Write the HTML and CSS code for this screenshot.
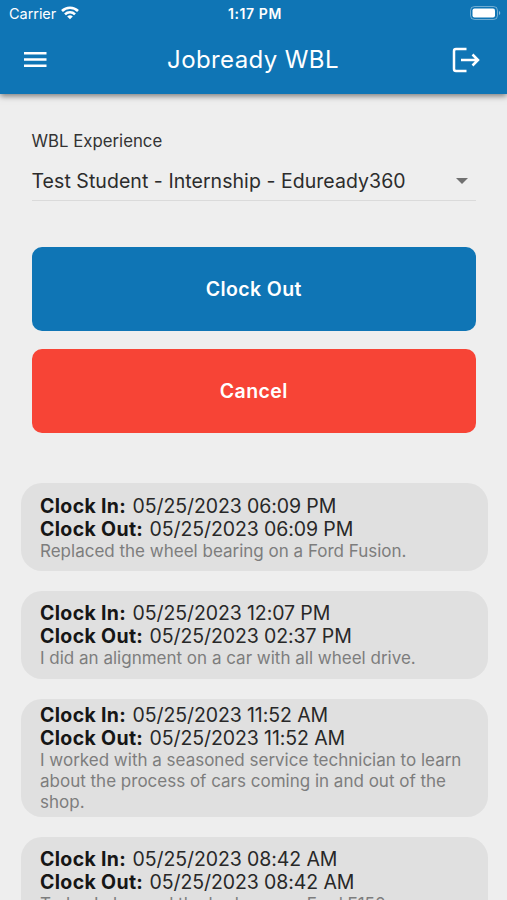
FILE: index.html
```html
<!DOCTYPE html>
<html lang="en">
<head>
<meta charset="utf-8">
<title>Jobready WBL</title>
<link rel="stylesheet" href="styles.css">
</head>
<body>
<header class="top">
  <div class="status">
    <div class="carrier"><span>Carrier</span>
      <svg width="18" height="14" viewBox="0 0 18 14" fill="none" stroke="#fff" stroke-width="2.6"><path d="M1 5a11.3 11.3 0 0 1 16 0M4 8.300a7.100 7.100 0 0 1 10 0"/><path d="M9 13.300 6.200 10.500a4 4 0 0 1 5.600 0z" fill="#fff" stroke="none"/></svg>
    </div>
    <div class="time">1:17 PM</div>
    <svg class="battery" width="31" height="14" viewBox="0 0 31 14"><rect x=".5" y=".5" width="27" height="13" rx="4" fill="none" stroke="#fff" stroke-opacity=".4"/><rect x="2.500" y="2.500" width="22.500" height="9" rx="2" fill="#fff"/><path d="M29 5a2.200 2.200 0 0 1 0 4z" fill="#fff" fill-opacity=".5"/></svg>
  </div>
  <div class="bar">
    <svg class="menu" width="24" height="16" viewBox="0 0 24 16" fill="#fff"><path d="M0 0h22.500v2.500H0zM0 6.300h22.500v2.500H0zM0 12.600h22.500v2.500H0z"/></svg>
    <h1>Jobready WBL</h1>
    <svg class="exit" width="28" height="26" viewBox="0 0 28 26" fill="none" stroke="#fff" stroke-width="2.500"><path d="M14.500 2H4Q2 2 2 4v18q0 2 2 2h10.500M9 13h17M20.500 7.500 26 13l-5.500 5.500"/></svg>
  </div>
</header>
<main>
  <section class="form">
    <div class="label">WBL Experience</div>
    <div class="select"><span>Test Student - Internship - Eduready360</span><i class="caret"></i></div>
    <button class="btn out">Clock Out</button>
    <button class="btn cancel">Cancel</button>
  </section>
  <section class="list">
    <article class="card first"><div class="row"><b>Clock In:</b> 05/25/2023 06:09 PM</div><div class="row"><b>Clock Out:</b> 05/25/2023 06:09 PM</div><p>Replaced the wheel bearing on a Ford Fusion.</p></article>
    <article class="card"><div class="row"><b>Clock In:</b> 05/25/2023 12:07 PM</div><div class="row"><b>Clock Out:</b> 05/25/2023 02:37 PM</div><p>I did an alignment on a car with all wheel drive.</p></article>
    <article class="card long"><div class="row"><b>Clock In:</b> 05/25/2023 11:52 AM</div><div class="row"><b>Clock Out:</b> 05/25/2023 11:52 AM</div><p>I worked with a seasoned service technician to learn<br>about the process of cars coming in and out of the<br>shop.</p></article>
    <article class="card"><div class="row"><b>Clock In:</b> 05/25/2023 08:42 AM</div><div class="row"><b>Clock Out:</b> 05/25/2023 08:42 AM</div><p>Today I changed the brakes on a Ford F150.</p></article>
  </section>
</main>
</body>
</html>
```
FILE: styles.css
```css
* { box-sizing: border-box; }
body { margin: 0; height: 900px; overflow: hidden; background: #eee; color: #282828; font-family: Inter, "Liberation Sans", sans-serif; }
.top { height: 94px; background: #0f75b5; color: #fff; box-shadow: 0 2px 6px rgba(0,0,0,.5); }
.status { height: 27px; display: grid; grid-template-columns: 1fr auto 1fr; align-items: center; padding: 0 6px 0 9px; font-size: 14.5px; }
.carrier { display: flex; align-items: center; gap: 6px; }
.carrier span { letter-spacing: -.05px; }
.carrier svg { margin-left: -1px; position: relative; top: -1px; }
.time { font-weight: 600; font-size: 14px; letter-spacing: .6px; }
.battery { justify-self: end; position: relative; top: -1px; }
.bar { height: 66px; display: grid; grid-template-columns: 1fr auto 1fr; align-items: center; padding: 0 27px 0 24px; }
h1 { margin: 0 0 0 2px; font-size: 24px; line-height: 30px; font-weight: 400; letter-spacing: .4px; }
.exit { justify-self: end; }
.form { padding: 36px 31px 0 31.5px; }
.label { font-size: 16.800px; line-height: 22px; letter-spacing: 0; color: #333; }
.select { display: flex; align-items: center; justify-content: space-between; margin-top: 9px; height: 40px; padding-right: 8px; border-bottom: 1px solid #dadada; font-size: 19.500px; letter-spacing: .05px; color: #2c2c2c; }
.caret { border: 6px solid transparent; border-top-color: #707070; border-bottom: 0; }
.btn { display: block; width: 100%; height: 84px; border: 0; border-radius: 10px; color: #fff; font: 600 19.500px Inter, sans-serif; letter-spacing: .4px; }
.out { margin-top: 46px; background: #0f75b5; }
.cancel { margin-top: 18px; background: #f74436; }
.list { padding: 50px 19.500px 0 20.500px; display: flex; flex-direction: column; gap: 20px; }
.card { flex: none; height: 88px; padding: 11px 19.500px 0; border-radius: 21px; background: #e0e0e0; }
.first { padding-top: 12px; }
.long { height: 118px; padding-top: 5px; }
.row { font-size: 19.500px; line-height: 23px; letter-spacing: -.1px; white-space: nowrap; }
.row b { margin-right: 1px; font-weight: 700; letter-spacing: .33px; color: #161616; }
p { margin: 0; font-size: 17px; line-height: 21px; color: #7d7d7d; white-space: nowrap; }
```
